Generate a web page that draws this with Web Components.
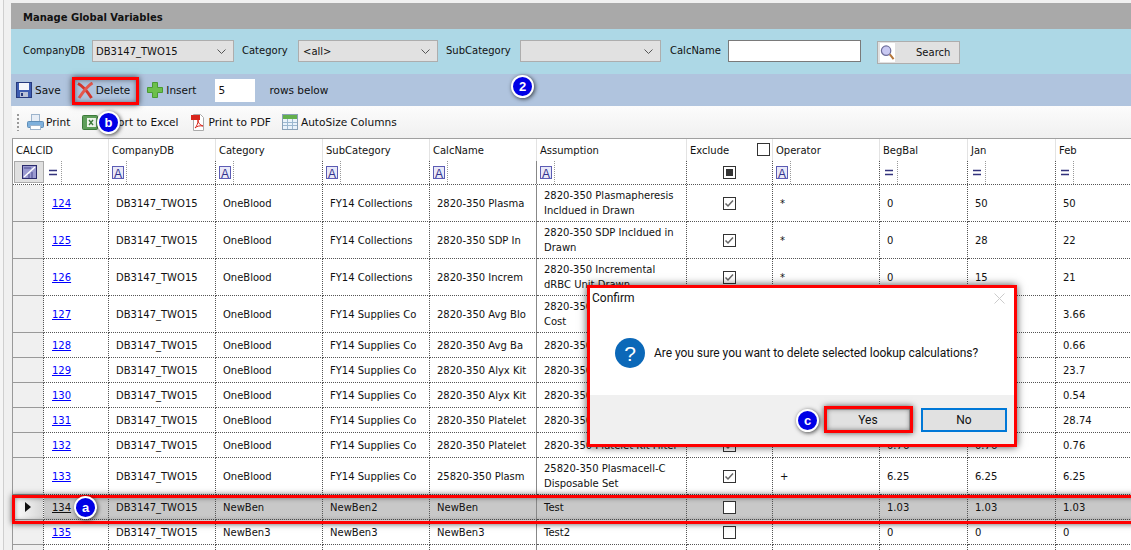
<!DOCTYPE html>
<html>
<head>
<meta charset="utf-8">
<title>Manage Global Variables</title>
<style>
  html, body { margin: 0; width: 1131px; height: 550px; overflow: hidden; background: #f0f0f0; }
  body { font: 10px "DejaVu Sans", sans-serif; color: #111; }
</style>
</head>
<body>
<gv-page></gv-page>

<script>
// Icons used by the toolbars
const ICONS = {
  save: `<svg width="16" height="16" viewBox="0 0 16 16"><rect x=".5" y=".5" width="15" height="15" fill="#3d5cb0" stroke="#26397c"/><rect x="3" y="1" width="10" height="7" fill="#f4f6fb"/><rect x="4" y="10" width="8" height="5" fill="#b9c2d6"/><rect x="5" y="11" width="2" height="3" fill="#26397c"/></svg>`,
  del: `<svg width="17" height="17" viewBox="0 0 17 17"><path d="M1 1.500C6 4 10 9 14.500 16" fill="none" stroke="#d5352b" stroke-width="3"/><path d="M15.500 1C10 4 6 10 2 16" fill="none" stroke="#e4574c" stroke-width="3"/></svg>`,
  plus: `<svg width="16" height="16" viewBox="0 0 16 16"><path d="M5.500 .5h5v5h5v5h-5v5h-5v-5h-5v-5h5z" fill="#6cc04a" stroke="#4a9a34"/></svg>`,
  print: `<svg width="17" height="17" viewBox="0 0 17 17"><rect x="4.500" y=".5" width="8" height="7" fill="#e8eef6" stroke="#9db4cc"/><rect x=".5" y="7.500" width="16" height="6" rx="1" fill="#7eb0dc" stroke="#5f8eb8"/><rect x="3.500" y="11.500" width="10" height="4" fill="#fff" stroke="#9db4cc"/></svg>`,
  excel: `<svg width="16" height="17" viewBox="0 0 16 17"><rect x=".5" y="1.500" width="15" height="14" rx="1" fill="#5e9e5a" stroke="#3c7a3a"/><rect x="5" y="4" width="9" height="9" fill="#eef5ec"/><path d="M7 6l4 5M11 6l-4 5" stroke="#3c7a3a" stroke-width="1.400"/></svg>`,
  pdf: `<svg width="16" height="17" viewBox="0 0 16 17"><path d="M3.500 .5h7l3 3v13h-10z" fill="#fff" stroke="#aaa"/><rect x="1" y="1" width="9" height="5" fill="#d8261c"/><path d="M5 14c2-2 3-5 3-8 0 3 2 5 5 6-3-.5-6 0-8 2z" fill="none" stroke="#d8261c"/></svg>`,
  autosize: `<svg width="16" height="16" viewBox="0 0 16 16"><rect x=".5" y=".5" width="15" height="15" fill="#eaf3fb" stroke="#8aa2b8"/><rect x="1" y="1" width="14" height="4" fill="#63b04e"/><path d="M5.500 5v10M10.500 5v10M1 8.500h14M1 11.500h14" stroke="#9cb8d0"/></svg>`,
  search: `<svg width="16" height="18" viewBox="0 0 16 18"><circle cx="6.500" cy="6.500" r="5" fill="#c9c9f2" stroke="#6d6d9a" stroke-width="1.300"/><path d="M10.500 10.500l4 5" stroke="#b5763a" stroke-width="2.200"/></svg>`
};

// One table row per entry: id, category, subcategory, name, assumption, operator, balances
const R = (id, cat, sub, name, note, op, beg, jan, feb, h, on = "on") => ({ id, cat, sub, name, note, op, beg, jan, feb, h, on });
const ROWS = [
  R(124, "OneBlood", "FY14 Collections", "2820-350 Plasma", "2820-350 Plasmapheresis<br>Incldued in Drawn", "*", "0", "50", "50", 37),
  R(125, "OneBlood", "FY14 Collections", "2820-350 SDP In", "2820-350 SDP Incldued in<br>Drawn", "*", "0", "28", "22", 37),
  R(126, "OneBlood", "FY14 Collections", "2820-350 Increm", "2820-350 Incremental<br>dRBC Unit Drawn", "*", "0", "15", "21", 37),
  R(127, "OneBlood", "FY14 Supplies Co", "2820-350 Avg Blo", "2820-350<br>Cost", "", "", "", "3.66", 37),
  R(128, "OneBlood", "FY14 Supplies Co", "2820-350 Avg Ba", "2820-350", "", "", "", "0.66", 25),
  R(129, "OneBlood", "FY14 Supplies Co", "2820-350 Alyx Kit", "2820-350", "", "", "", "23.7", 25),
  R(130, "OneBlood", "FY14 Supplies Co", "2820-350 Alyx Kit", "2820-350", "", "", "", "0.54", 25),
  R(131, "OneBlood", "FY14 Supplies Co", "2820-350 Platelet", "2820-350", "", "", "", "28.74", 25),
  R(132, "OneBlood", "FY14 Supplies Co", "2820-350 Platelet", "2820-350 Platelet Kit Filter", "*", "0.76", "0.76", "0.76", 25),
  R(133, "OneBlood", "FY14 Supplies Co", "25820-350 Plasm", "25820-350 Plasmacell-C<br>Disposable Set", "+", "6.25", "6.25", "6.25", 37),
  R(134, "NewBen", "NewBen2", "NewBen", "Test", "", "1.03", "1.03", "1.03", 25, "off"),
  R(135, "NewBen3", "NewBen3", "NewBen3", "Test2", "", "0", "0", "0", 25, "off"),
  // The next row only just starts at the bottom of the window
  R("", "", "", "", "", "", "", "", "", 25, "")
];
const SELECTED_ID = 134;
const COLUMNS = "31px 65px 107px 107px 107px 107px 150px 86px 107px 88px 88px 88px";

class FilterSelect extends HTMLElement {
  connectedCallback() {
    const shadow = this.attachShadow({ mode: "open" });
    shadow.innerHTML = `
      <style>
        :host { display: flex; align-items: center; justify-content: space-between; box-sizing: border-box; height: 22px; padding: 0 7px 0 3px; background: #e1e1e1; border: 1px solid #adadad; color: #111; }
        svg { flex: none; }
      </style>
      <span><slot></slot></span>
      <svg width="9" height="5" viewBox="0 0 9 5"><path d="M.5.500l4 4 4-4" fill="none" stroke="#555"/></svg>
    `;
  }
}
customElements.define("filter-select", FilterSelect);

class FilterBar extends HTMLElement {
  connectedCallback() {
    const shadow = this.attachShadow({ mode: "open" });
    shadow.innerHTML = `
      <style>
        :host { display: flex; align-items: flex-start; box-sizing: border-box; height: 45px; padding: 11px 0 0 12px; background: #add8e6; }
        label { height: 20px; line-height: 22px; }
        filter-select { flex: none; }
        .field { flex: none; box-sizing: border-box; width: 133px; height: 22px; background: #fff; border: 1px solid #7a7a7a; }
        .search { flex: none; box-sizing: border-box; display: flex; align-items: center; width: 83px; height: 23px; margin: 1px 0 0 16px; padding-left: 2px; background: #e1e1e1; border: 1px solid #adadad; }
        .search i { display: flex; align-items: center; justify-content: center; width: 15px; height: 19px; background: #fff; }
        .search span { margin-left: 21px; }
      </style>
      <label style="width:69px">CompanyDB</label>
      <filter-select style="width:142px">DB3147_TWO15</filter-select>
      <label style="width:56px;margin-left:8px">Category</label>
      <filter-select style="width:140px;padding-left:4px">&lt;all&gt;</filter-select>
      <label style="width:74px;margin-left:8px">SubCategory</label>
      <filter-select style="width:141px"></filter-select>
      <label style="width:58px;margin-left:9px">CalcName</label>
      <div class="field"></div>
      <div class="search"><i>${ICONS.search}</i><span>Search</span></div>
    `;
  }
}
customElements.define("filter-bar", FilterBar);

class ToolButton extends HTMLElement {
  connectedCallback() {
    const shadow = this.attachShadow({ mode: "open" });
    shadow.innerHTML = `
      <style>
        :host { display: inline-flex; flex: none; align-items: center; gap: 3px; white-space: nowrap; }
        svg { display: block; flex: none; }
      </style>
      ${ICONS[this.getAttribute("icon")]}
      <span><slot></slot></span>
    `;
  }
}
customElements.define("tool-button", ToolButton);

class ActionBar extends HTMLElement {
  connectedCallback() {
    const shadow = this.attachShadow({ mode: "open" });
    shadow.innerHTML = `
      <style>
        :host { display: flex; align-items: center; box-sizing: border-box; height: 32px; padding-left: 5px; background: #b0c4de; font-size: 10.500px; }
        .count { flex: none; box-sizing: border-box; width: 40px; height: 23px; margin-left: 19px; padding-left: 3px; line-height: 23px; background: #fff; }
      </style>
      <tool-button icon="save">Save</tool-button>
      <tool-button icon="del" style="margin-left:16px;gap:2px">Delete</tool-button>
      <tool-button icon="plus" style="margin-left:17px">Insert</tool-button>
      <div class="count">5</div>
      <span style="margin-left:14px">rows below</span>
    `;
  }
}
customElements.define("action-bar", ActionBar);

class ExportBar extends HTMLElement {
  connectedCallback() {
    const shadow = this.attachShadow({ mode: "open" });
    shadow.innerHTML = `
      <style>
        :host { display: flex; align-items: center; box-sizing: border-box; height: 33px; padding: 0 0 0 5px; background: linear-gradient(#fcfcfc, #f0f0f0); border-bottom: 1px solid #a0a0a0; font-size: 10.600px; }
        .grip { width: 2px; height: 17px; margin-right: 8px; background: repeating-linear-gradient(#999 0 2px, transparent 2px 4px); }
      </style>
      <div class="grip"></div>
      <tool-button icon="print" style="gap:2px">Print</tool-button>
      <tool-button icon="excel" style="margin-left:12px;gap:0">Export to Excel</tool-button>
      <tool-button icon="pdf" style="margin-left:11px">Print to PDF</tool-button>
      <tool-button icon="autosize" style="margin-left:11px">AutoSize Columns</tool-button>
    `;
  }
}
customElements.define("export-bar", ExportBar);

// Small check box used by the Exclude column
class CheckMark extends HTMLElement {
  connectedCallback() {
    const shadow = this.attachShadow({ mode: "open" });
    const state = this.getAttribute("state");
    const mark = state === "on"
      ? `<path d="M2.500 6.500l2.500 2.500 5-5.500" fill="none" stroke="#666" stroke-width="1.500"/>`
      : state === "mixed" ? `<rect x="3" y="3" width="7" height="7" fill="#333"/>` : "";
    shadow.innerHTML = `
      <style>
        :host { display: block; width: 13px; height: 13px; }
        svg { display: block; }
      </style>
      <svg width="13" height="13" viewBox="0 0 13 13"><rect x=".5" y=".5" width="12" height="12" fill="#fff" stroke="#333"/>${mark}</svg>
    `;
  }
}
customElements.define("check-mark", CheckMark);

class GridHeader extends HTMLElement {
  connectedCallback() {
    const shadow = this.attachShadow({ mode: "open" });
    const A = `<svg class="ico" width="12" height="13" viewBox="0 0 12 13"><rect x=".5" y=".5" width="11" height="12" fill="#e9e9f8" stroke="#5c5cb4"/><text x="6" y="11.500" text-anchor="middle" font-size="12" font-family="Liberation Sans" fill="#33338f">A</text></svg>`;
    const EQ = `<svg class="ico" width="12" height="13" viewBox="0 0 12 13"><path d="M2 4.500h8M2 8.500h8" stroke="#33337c" stroke-width="1.300"/></svg>`;
    const filter = icon => `<div class="f">${icon}<b></b></div>`;
    shadow.innerHTML = `
      <style>
        :host { display: block; }
        .row { display: grid; grid-template-columns: ${COLUMNS}; }
        .t > div { box-sizing: border-box; height: 22px; padding: 6px 0 0 3px; border-right: 1px solid #e3e3e3; white-space: nowrap; position: relative; }
        .t > .wide { grid-column: span 2; }
        .t check-mark { position: absolute; right: 2px; top: 4px; }
        .b { height: 23px; border-bottom: 1px dotted #555; }
        .f { display: flex; align-items: center; box-sizing: border-box; height: 23px; padding-left: 3px; border-right: 1px dotted #555; }
        .f b { align-self: stretch; margin-left: 2px; border-right: 1px dotted #999; }
        .ico { display: block; flex: none; }
        .corner { display: flex; align-items: center; justify-content: center; box-sizing: border-box; height: 22px; margin-left: 1px; background: #e0e0e0; border: 1px solid #aaa; }
        .solid { border-right-color: #888 !important; border-right-style: solid !important; }
        .x { display: flex; align-items: center; justify-content: center; box-sizing: border-box; height: 23px; padding-right: 1px; border-right: 1px dotted #555; }
      </style>
      <div class="row t">
        <div class="wide">CALCID</div>
        <div>CompanyDB</div><div>Category</div><div>SubCategory</div><div>CalcName</div><div>Assumption</div>
        <div>Exclude<check-mark></check-mark></div>
        <div>Operator</div><div>BegBal</div><div>Jan</div><div>Feb</div>
      </div>
      <div class="row b">
        <div class="corner"><svg width="15" height="14" viewBox="0 0 15 14"><rect x=".5" y=".5" width="14" height="13" fill="#9a9ad0" stroke="#2b2b6c"/><path d="M2 12L13 2" stroke="#fff" stroke-width="1.500"/><path d="M2 3h7M7 9v4M10 7v6" stroke="#4a4a90"/></svg></div>
        ${filter(EQ)}${filter(A)}${filter(A)}${filter(A)}${filter(A).replace('class="f"', 'class="f solid"')}
        ${filter(A)}
        <div class="x"><check-mark state="mixed"></check-mark></div>
        ${filter(A)}${filter(EQ)}${filter(EQ)}${filter(EQ)}
      </div>
    `;
  }
}
customElements.define("grid-header", GridHeader);

class GridRow extends HTMLElement {
  set row(r) { this._row = r; }
  connectedCallback() {
    const r = this._row;
    const selected = r.id === SELECTED_ID;
    const shadow = this.attachShadow({ mode: "open" });
    shadow.innerHTML = `
      <style>
        :host { display: grid; grid-template-columns: ${COLUMNS}; height: ${r.h}px; background: ${selected ? "#c8c8c8" : "#fff"}; }
        div { display: flex; align-items: center; box-sizing: border-box; padding-left: 7px; border-right: 1px dotted #555; border-bottom: 1px dotted #555; white-space: nowrap; overflow: hidden; }
        .head { padding: 0; background: ${selected ? "linear-gradient(90deg,#fff,#d6d6d6)" : "#f0f0f0"}; border-bottom: 1px solid #999; justify-content: center; }
        .id { padding-left: 8px; }
        a { color: ${selected ? "#111" : "#00f"}; text-decoration: underline; }
        .solid { border-right: 1px solid #888; }
        .note { line-height: 15px; }
        .mid { justify-content: center; padding: 0 1px 0 0; }
        .tri { width: 0; height: 0; border-left: 6px solid #111; border-top: 5px solid transparent; border-bottom: 5px solid transparent; }
      </style>
      <div class="head">${selected ? '<span class="tri"></span>' : ""}</div>
      <div class="id"><a>${r.id}</a></div>
      <div>${r.id ? "DB3147_TWO15" : ""}</div>
      <div>${r.cat}</div>
      <div>${r.sub}</div>
      <div class="solid">${r.name}</div>
      <div class="note"><span>${r.note}</span></div>
      <div class="mid">${r.on ? `<check-mark state="${r.on}"></check-mark>` : ""}</div>
      <div>${r.op}</div>
      <div>${r.beg}</div>
      <div>${r.jan}</div>
      <div>${r.feb}</div>
    `;
  }
}
customElements.define("grid-row", GridRow);

class DataGrid extends HTMLElement {
  connectedCallback() {
    const shadow = this.attachShadow({ mode: "open" });
    shadow.innerHTML = `
      <style>
        :host { display: block; width: 1131px; background: #fff; border-left: 1px solid #999; overflow: hidden; }
      </style>
      <grid-header></grid-header>
    `;
    ROWS.forEach(r => {
      const row = document.createElement("grid-row");
      row.row = r;
      shadow.appendChild(row);
    });
  }
}
customElements.define("data-grid", DataGrid);

// Red rectangle drawn over the screenshot by its author
class RedBox extends HTMLElement {
  connectedCallback() {
    const shadow = this.attachShadow({ mode: "open" });
    shadow.innerHTML = `
      <style>
        :host { display: block; position: absolute; box-sizing: border-box; border: 3px solid #f00; box-shadow: 0 0 6px rgba(0,0,0,.65), inset 0 0 5px rgba(0,0,0,.45); }
      </style>
    `;
  }
}
customElements.define("red-box", RedBox);

class NoteBadge extends HTMLElement {
  connectedCallback() {
    const shadow = this.attachShadow({ mode: "open" });
    shadow.innerHTML = `
      <style>
        :host { display: flex; position: absolute; align-items: center; justify-content: center; box-sizing: border-box; width: 23px; height: 23px; border-radius: 50%; background: #0000e6; border: 2px solid #fff; box-shadow: 1px 1px 4px rgba(0,0,0,.7); color: #fff; font: bold 13px "Liberation Sans", sans-serif; }
      </style>
      <slot></slot>
    `;
  }
}
customElements.define("note-badge", NoteBadge);

class DialogButton extends HTMLElement {
  connectedCallback() {
    const shadow = this.attachShadow({ mode: "open" });
    shadow.innerHTML = `
      <style>
        :host { display: flex; align-items: center; justify-content: center; box-sizing: border-box; width: 86px; height: 24px; background: #e1e1e1; border: 2px solid #adadad; font: 12px Roboto, sans-serif; color: #111; }
        :host([primary]) { border-color: #0078d7; }
      </style>
      <slot></slot>
    `;
  }
}
customElements.define("dialog-button", DialogButton);

class ConfirmDialog extends HTMLElement {
  connectedCallback() {
    const shadow = this.attachShadow({ mode: "open" });
    shadow.innerHTML = `
      <style>
        :host { display: flex; flex-direction: column; position: absolute; box-sizing: border-box; background: #fff; border: 3px solid #f00; box-shadow: 0 0 8px rgba(0,0,0,.7); font: 12px Roboto, sans-serif; color: #111; }
        header { display: flex; justify-content: space-between; align-items: center; height: 20px; padding: 0 9px 0 2px; }
        main { flex: 1; display: flex; align-items: center; gap: 9px; padding: 3px 0 0 25px; letter-spacing: -.05px; }
        main svg { flex: none; }
        footer { display: flex; justify-content: flex-end; align-items: center; gap: 10px; height: 49px; padding: 0 7px 0 0; background: #f0f0f0; }
      </style>
      <header><span>Confirm</span>
        <svg width="11" height="11" viewBox="0 0 11 11"><path d="M.5.500l10 10M10.500.500l-10 10" stroke="#ccc"/></svg>
      </header>
      <main>
        <svg width="30" height="30" viewBox="0 0 30 30"><circle cx="15" cy="15" r="15" fill="#0b68b8"/><text x="15" y="23" text-anchor="middle" font-size="21" font-family="Liberation Sans" fill="#fff">?</text></svg>
        <span><slot></slot></span>
      </main>
      <footer><slot name="buttons"></slot></footer>
    `;
  }
}
customElements.define("confirm-dialog", ConfirmDialog);

class GvPage extends HTMLElement {
  connectedCallback() {
    const shadow = this.attachShadow({ mode: "open" });
    shadow.innerHTML = `
      <style>
        :host { display: block; position: relative; box-sizing: border-box; width: 1131px; height: 550px; padding: 3px 0 0 11px; overflow: hidden; background: linear-gradient(90deg, #f5f5f5 0 3px, #cfcfcf 3px 4px, #f0f0f0 4px); }
        .title { box-sizing: border-box; height: 26px; padding: 0 0 0 12px; line-height: 30px; background: #a9a9a9; font-weight: bold; color: #111; }
        data-grid { margin-left: 1px; }
        export-bar { margin-left: 1px; }
      </style>
      <div class="title">Manage Global Variables</div>
      <filter-bar></filter-bar>
      <action-bar></action-bar>
      <export-bar></export-bar>
      <data-grid></data-grid>

      <red-box style="left:72px;top:77px;width:67px;height:28px"></red-box>
      <note-badge style="left:511px;top:75px">2</note-badge>
      <note-badge style="left:97px;top:111px">b</note-badge>
      <red-box style="left:12px;top:495px;width:1130px;height:29px"></red-box>
      <note-badge style="left:74px;top:496px">a</note-badge>

      <confirm-dialog style="left:587px;top:285px;width:430px;height:162px">
        Are you sure you want to delete selected lookup calculations?
        <dialog-button slot="buttons">Yes</dialog-button>
        <dialog-button slot="buttons" primary>No</dialog-button>
      </confirm-dialog>
      <red-box style="left:824px;top:406px;width:89px;height:27px"></red-box>
      <note-badge style="left:796px;top:409px">c</note-badge>
    `;
  }
}
customElements.define("gv-page", GvPage);
</script>
</body>
</html>
